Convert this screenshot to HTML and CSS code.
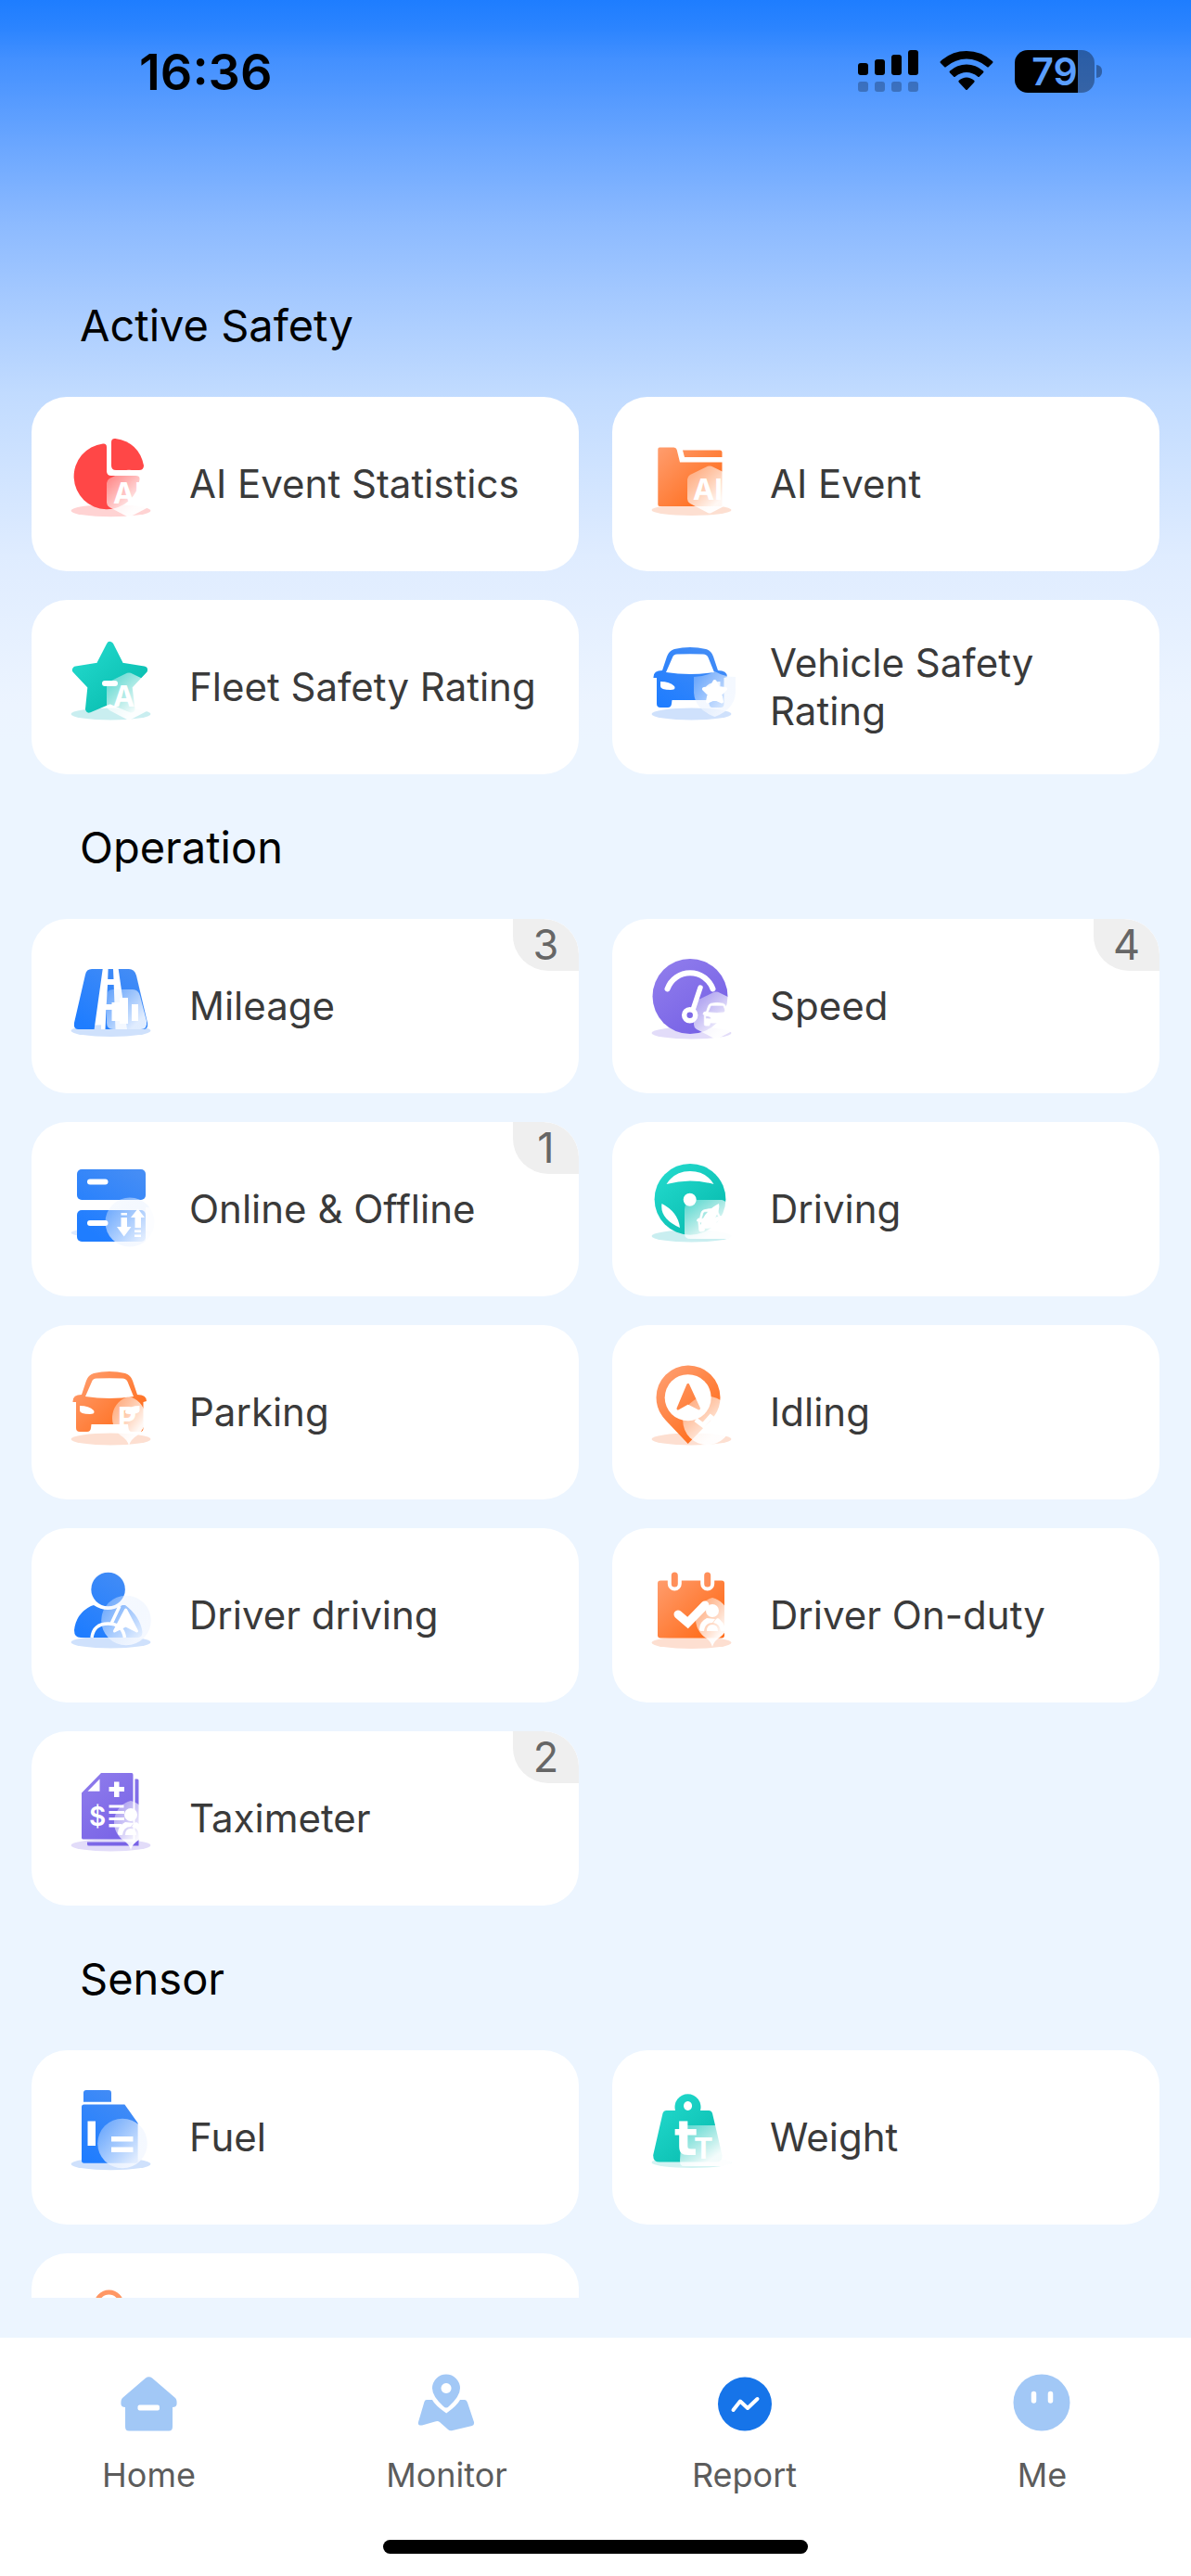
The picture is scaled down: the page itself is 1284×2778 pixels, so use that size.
FILE: index.html
```html
<!DOCTYPE html>
<html lang="en">

<head>
    <meta charset="UTF-8">
    <meta name="viewport" content="width=device-width, initial-scale=1.0">
    <title>Report</title>
    <link rel="stylesheet" href="styles.css">
</head>

<body>
    <!-- Shared gradients and shapes for the report icons -->
    <svg class="defs" aria-hidden="true">
        <defs>
            <linearGradient id="orange" gradientUnits="userSpaceOnUse" x1="8" y1="12" x2="66" y2="72"><stop offset="0" stop-color="#ff9d6e"/><stop offset="1" stop-color="#ff6c1a"/></linearGradient>
            <linearGradient id="teal" gradientUnits="userSpaceOnUse" x1="12" y1="8" x2="62" y2="64"><stop offset="0" stop-color="#22d9cc"/><stop offset="1" stop-color="#0bbfb2"/></linearGradient>
            <linearGradient id="blue" gradientUnits="userSpaceOnUse" x1="66" y1="8" x2="20" y2="76"><stop offset="0" stop-color="#458df5"/><stop offset="1" stop-color="#1f7dff"/></linearGradient>
            <linearGradient id="purple" gradientUnits="userSpaceOnUse" x1="10" y1="8" x2="60" y2="74"><stop offset="0" stop-color="#8f7cec"/><stop offset="1" stop-color="#7863e6"/></linearGradient>
            <linearGradient id="glass" x1="0" y1="0" x2="0.8" y2="0.9"><stop offset="0" stop-color="#fff" stop-opacity="0.25"/><stop offset="0.85" stop-color="#fff" stop-opacity="0.95"/></linearGradient>
            <linearGradient id="glass-blue" x1="0" y1="0" x2="0.8" y2="0.8"><stop offset="0" stop-color="#e4efff" stop-opacity="0.25"/><stop offset="1" stop-color="#f4f8ff" stop-opacity="0.9"/></linearGradient>
            <path id="car" fill-rule="evenodd" d="M25 11Q42 7 59 11Q65 13 67 19L72 34Q82 34 82 41L78.5 42V70Q78.5 74 75 74H66Q63 74 62.5 70L62 66H22.5L22 70Q21.5 74 18 74H10Q6 74 6 70V42L2.5 42Q2 34 12 34L17 19Q19 13 25 11ZM23 20L16 36Q42 40 68 36L61.5 20Q60 16.5 56 16.5Q42 16 28 16.5Q24 16.5 23 20ZM10 46V51Q10 55 21 55Q27 55 25 51Q20 46 10 46ZM74.5 46Q64.5 46 59.5 51Q57.5 55 63.5 55Q74.5 55 74.5 51Z"/>
            <path id="hexagon" d="M61 0.8Q63 0 65 0.8L84 10Q87 12 87 15V36Q87 39 84 41L65 51Q63 52 61 51L42 41Q39 39 39 36V15Q39 12 42 10Z"/>
            <path id="pin" d="M24 0A24 24 0 0 1 33 42Q26 46 24 53Q22 46 15 42A24 24 0 0 1 24 0Z"/>
            <g id="person"><circle cx="14" cy="7" r="7"/><path d="M8 15Q0 19 0 27Q0 29 3 29H5Q6 20 14 20L17 16ZM18 16L15 20Q22 21 23 29H28Q27 19 20 15ZM8 29Q8 22 14 22Q20 22 20 29Z"/></g>
        </defs>
    </svg>

    <header class="status-bar">
        <time class="clock">16:36</time>
        <div class="status-icons">
            <svg width="65" height="46" viewBox="0 0 65 46" aria-hidden="true">
                <g><rect x="0" y="14" width="11" height="13" rx="3"/><rect x="18" y="10" width="11" height="17" rx="3"/><rect x="36" y="5" width="11" height="22" rx="3"/><rect x="54" y="0" width="11" height="27" rx="3"/></g>
                <g opacity="0.25"><rect x="0" y="34" width="11" height="11" rx="3"/><rect x="18" y="34" width="11" height="11" rx="3"/><rect x="36" y="34" width="11" height="11" rx="3"/><rect x="54" y="34" width="11" height="11" rx="3"/></g>
            </svg>
            <svg width="58" height="46" viewBox="0 0 58 46" aria-hidden="true">
                <path d="M29 1Q45 1 57 12Q58 13 57 14L53 18Q52 19 51 18Q41 9.5 29 9.5Q17 9.5 7 18Q6 19 5 18L1 14Q0 13 1 12Q13 1 29 1Z"/>
                <path d="M29 15.5Q39 15.5 47 22.5Q48 23.5 47 24.5L43 28.5Q42 29.5 41 28.5Q35.5 24 29 24Q22.5 24 17 28.5Q16 29.5 15 28.5L11 24.5Q10 23.5 11 22.5Q19 15.5 29 15.5Z"/>
                <path d="M29 29.5Q33.5 29.5 37.5 33Q38 34 37 35L30 42.5Q29 43.5 28 42.5L21 35Q20 34 20.5 33Q24.5 29.5 29 29.5Z"/>
            </svg>
            <div class="battery">79</div>
        </div>
    </header>

    <main class="reports">
        <section>
            <h2>Active Safety</h2>
            <div class="grid">
                <a class="card" href="#">
                    <svg class="icon" viewBox="0 0 92 104" aria-hidden="true">
                        <ellipse cx="43.5" cy="80.7" rx="43" ry="6.5" fill="#ffd3d3"/>
                        <g fill="#ff4747">
                            <path d="M39 12V38Q39 43 44 43H70Q75 43 74.5 47A35.5 35.5 0 1 1 35 8.5Q39 8 39 12Z"/>
                            <path d="M44 7Q44 2.500 48.5 3Q74 7 79 32Q79 37 74 37H49Q44 37 44 32Z"/>
                        </g>
                        <use href="#hexagon" y="36" fill="url(#glass)"/>
                        <text class="mark" x="46" y="73">AI</text>
                    </svg>
                    <span>AI Event Statistics</span>
                </a>
                <a class="card" href="#">
                    <svg class="icon" viewBox="0 0 92 104" aria-hidden="true">
                        <ellipse cx="43.5" cy="80" rx="43" ry="6" fill="#fddfd1"/>
                        <g fill="url(#orange)">
                            <path d="M9 12.5H24.5Q27 12.5 27.7 15L31 28.5H76.5V76H9Q7.3 76 7.3 74V14.5Q7.3 12.5 9 12.5Z"/>
                            <path d="M34 15.5H74Q76.5 15.5 76.5 18V23H36Z"/>
                        </g>
                        <use href="#hexagon" y="32" fill="url(#glass)"/>
                        <text class="mark" x="45" y="69">AI</text>
                    </svg>
                    <span>AI Event</span>
                </a>
                <a class="card" href="#">
                    <svg class="icon" viewBox="0 0 92 104" aria-hidden="true">
                        <ellipse cx="43.5" cy="81" rx="43" ry="6.5" fill="#c9eef0"/>
                        <path d="M42.6 7L54 29.5L79 33.5L62.5 51L65.5 75.5L42.6 66L20 75.5L22.5 51L6 33.5L31 29.5Z" fill="url(#teal)" stroke="url(#teal)" stroke-width="8" stroke-linejoin="round"/>
                        <use href="#hexagon" y="36" fill="url(#glass)"/>
                        <rect x="34" y="45" width="17" height="6" rx="3" fill="#fff"/>
                        <text class="mark" x="46" y="73">AI</text>
                    </svg>
                    <span>Fleet Safety Rating</span>
                </a>
                <a class="card" href="#">
                    <svg class="icon" viewBox="0 0 92 104" aria-hidden="true">
                        <ellipse cx="43.5" cy="81" rx="43" ry="6.5" fill="#cfe1fc"/>
                        <use href="#car" fill="url(#blue)"/>
                        <path d="M46 41Q58 41 68.5 35Q79 41 91 41V58Q90 76 68.5 84Q47 76 46 58Z" fill="url(#glass-blue)"/>
                        <path d="M68.5 46L72 53L80 54L74.5 59.5L76 67.5L68.5 64L61 67.5L62.5 59.5L57 54L65 53Z" fill="#fff" stroke="#fff" stroke-width="4" stroke-linejoin="round"/>
                    </svg>
                    <span>Vehicle Safety Rating</span>
                </a>
            </div>
        </section>

        <section>
            <h2>Operation</h2>
            <div class="grid">
                <a class="card" href="#">
                    <svg class="icon" viewBox="0 0 92 104" aria-hidden="true">
                        <ellipse cx="43.5" cy="78.5" rx="43" ry="6.5" fill="#cfe1fc"/>
                        <path d="M33 77H63L52 12H34.5Z" fill="#fff"/>
                        <g fill="url(#blue)">
                            <path d="M34.7 12L25.6 77H8Q3 77 4 70L16 18Q17 12 23 12Z"/>
                            <path d="M51.7 12H63Q69 12 71 19L83 70Q84 77 79 77H61Z"/>
                            <path d="M40.6 12H46L46.5 23H40.2ZM40 29H46.7L47.5 50H38.8ZM38.5 56H47.7L48.5 77H37.5Z"/>
                        </g>
                        <path d="M46 34H67Q73 34 75 41L82 68Q83 77 76 77H46Q39 77 39 70V41Q39 34 46 34Z" fill="url(#glass-blue)"/>
                        <path d="M44.5 48H53V68H44.5ZM53 43H62V71H53ZM66 50H73V68H66Z" fill="#fff"/>
                        <path d="M32 53H47" stroke="#fff" stroke-width="5"/>
                    </svg>
                    <span>Mileage</span>
                    <span class="badge">3</span>
                </a>
                <a class="card" href="#">
                    <svg class="icon" viewBox="0 0 92 104" aria-hidden="true">
                        <ellipse cx="43.5" cy="81" rx="43" ry="6.5" fill="#e2dcf9"/>
                        <circle cx="42" cy="41.5" r="40.5" fill="url(#purple)"/>
                        <use href="#hexagon" x="7" y="36" fill="url(#glass)"/>
                        <g fill="none" stroke="#fff" stroke-linecap="round">
                            <path d="M17.5 33.5A26 26 0 0 1 66.5 33.5" stroke-width="6"/>
                            <path d="M53 32L45 56" stroke-width="5.5"/>
                            <circle cx="41.7" cy="61.7" r="6" stroke-width="5.5"/>
                        </g>
                        <use href="#car" transform="translate(55 45) scale(0.38)" fill="#fff" stroke="#fff" stroke-width="2"/>
                    </svg>
                    <span>Speed</span>
                    <span class="badge">4</span>
                </a>
                <a class="card" href="#">
                    <svg class="icon" viewBox="0 0 92 104" aria-hidden="true">
                        <ellipse cx="43.5" cy="77.5" rx="43" ry="5.5" fill="#dfeafd"/>
                        <g fill="url(#blue)">
                            <rect x="7" y="9" width="74" height="33" rx="5"/>
                            <rect x="7" y="53" width="74" height="34" rx="5"/>
                        </g>
                        <circle cx="64" cy="66" r="26.5" fill="url(#glass-blue)"/>
                        <rect x="81" y="50" width="11" height="38" fill="#fff" opacity="0.7"/>
                        <g fill="#fff">
                            <rect x="18" y="19.5" width="22.5" height="6" rx="3"/>
                            <rect x="18" y="64" width="22.5" height="6" rx="3"/>
                            <path d="M54.5 61H61V71H65.5L57.7 81.5L50 71H54.5ZM54.5 56H61V58.5H54.5Z"/>
                            <path d="M69.5 72V61H65L72.6 51.5L80 61H76V72ZM69 74.5H76V77H69ZM69 79.5H76V82H69Z"/>
                        </g>
                    </svg>
                    <span>Online &amp; Offline</span>
                    <span class="badge">1</span>
                </a>
                <a class="card" href="#">
                    <svg class="icon" viewBox="0 0 92 104" aria-hidden="true">
                        <ellipse cx="43.5" cy="81" rx="43" ry="6.5" fill="#c9eef0"/>
                        <circle cx="42" cy="41.3" r="38.4" fill="url(#teal)"/>
                        <path d="M46 42H76Q80 42 82 48L88 78Q88 84 82 84H42Q36 84 36 78V52Q37 42 46 42Z" fill="url(#glass)"/>
                        <g fill="#fff">
                            <path d="M16.5 25Q25 11 42 11Q59 11 67.5 25Q42 18 16.5 25Z"/>
                            <circle cx="41.7" cy="41.7" r="7"/>
                            <path d="M11.5 46Q9 62 31 72Q29 55 11.5 46ZM73 46Q76 62 53 72Q55 55 73 46Z"/>
                            <use href="#car" transform="translate(47 50) rotate(-6) scale(0.36)" stroke="#fff" stroke-width="2"/>
                        </g>
                    </svg>
                    <span>Driving</span>
                </a>
                <a class="card" href="#">
                    <svg class="icon" viewBox="0 0 92 104" aria-hidden="true">
                        <ellipse cx="43.5" cy="81" rx="43" ry="6.5" fill="#fddfd1"/>
                        <use href="#car" y="-1" fill="url(#orange)"/>
                        <use href="#pin" x="39" y="35" fill="url(#glass)"/>
                        <text class="mark" x="51" y="69">P</text>
                    </svg>
                    <span>Parking</span>
                </a>
                <a class="card" href="#">
                    <svg class="icon" viewBox="0 0 92 104" aria-hidden="true">
                        <ellipse cx="43.5" cy="81" rx="43" ry="6.5" fill="#fddfd1"/>
                        <path d="M39.7 1.5A34.5 34.5 0 0 1 74.5 36Q74.5 50 64 61L39.7 86L16 61Q5.5 50 5.5 36A34.5 34.5 0 0 1 39.7 1.5Z" fill="url(#orange)"/>
                        <circle cx="39.7" cy="36.2" r="25" fill="#fff"/>
                        <path d="M39.7 22.5L51.5 48L39.7 42L29 48Z" fill="url(#orange)" stroke="url(#orange)" stroke-width="3" stroke-linejoin="round"/>
                        <circle cx="60.5" cy="61" r="26.3" fill="url(#glass)"/>
                        <path d="M48 60L56 66L64 57L69 61" fill="none" stroke="#fff" stroke-width="5"/>
                    </svg>
                    <span>Idling</span>
                </a>
                <a class="card" href="#">
                    <svg class="icon" viewBox="0 0 92 104" aria-hidden="true">
                        <ellipse cx="43.5" cy="81" rx="43" ry="6.5" fill="#cfe1fc"/>
                        <circle cx="40.6" cy="24" r="18.3" fill="url(#blue)"/>
                        <path d="M25 41Q40 51 56 41H59Q75 53 77.5 70Q77.5 76 72 76H11Q4 76 4 68Q6 50 22 42Z" fill="url(#blue)"/>
                        <circle cx="60" cy="57.5" r="26.8" fill="url(#glass-blue)"/>
                        <path d="M23 76Q25 61 40.5 61Q56 61 58.5 76M53 42L44 61" fill="none" stroke="#fff" stroke-width="3.5"/>
                        <path d="M59.6 46L71.5 69L59.6 63L47.5 69Z" fill="#fff" stroke="#fff" stroke-width="3" stroke-linejoin="round"/>
                    </svg>
                    <span>Driver driving</span>
                </a>
                <a class="card" href="#">
                    <svg class="icon" viewBox="0 0 92 104" aria-hidden="true">
                        <ellipse cx="43.5" cy="81.5" rx="43" ry="6.5" fill="#fddfd1"/>
                        <rect x="7" y="14.5" width="72" height="62" rx="3" fill="url(#orange)"/>
                        <path d="M25.3 5V18M60.7 5V18" stroke="#fff" stroke-width="15" stroke-linecap="round"/>
                        <path d="M25.3 9V18M60.7 9V18" stroke="#ff8f5a" stroke-width="7" stroke-linecap="round"/>
                        <use href="#pin" x="42" y="33" fill="url(#glass)"/>
                        <path d="M29 51L39.5 60L58 41" fill="none" stroke="#fff" stroke-width="9" stroke-linecap="round"/>
                        <use href="#person" x="52" y="40" fill="#fff"/>
                    </svg>
                    <span>Driver On-duty</span>
                </a>
                <a class="card" href="#">
                    <svg class="icon" viewBox="0 0 92 104" aria-hidden="true">
                        <ellipse cx="43.5" cy="81" rx="43" ry="6.5" fill="#e2dcf9"/>
                        <path d="M33 3H66Q67.5 3 67.5 5V74.5H14Q12 74.5 12 73V24.5ZM69.5 9.5H72Q73.5 9.5 73.5 11V81.5H20Q18 81.5 18 80V77.5H69.5Z" fill="url(#purple)"/>
                        <use href="#pin" x="41" y="33" fill="url(#glass)"/>
                        <g fill="#fff">
                            <path d="M31.5 9.5V22.7H18.5Z"/>
                            <path d="M47 12.5H52.5V18H58V23H52.5V29H47V23H41.5V18H47Z"/>
                            <path d="M41.5 37.5H57.5V40.5H41.5ZM41.5 44H58V47H41.5ZM41.5 51H58V54H41.5ZM41.5 58H55V61.5H41.5Z"/>
                            <use href="#person" x="51" y="41"/>
                        </g>
                        <text class="mark mark-small" x="20" y="60">$</text>
                    </svg>
                    <span>Taximeter</span>
                    <span class="badge">2</span>
                </a>
            </div>
        </section>

        <section>
            <h2>Sensor</h2>
            <div class="grid">
                <a class="card" href="#">
                    <svg class="icon" viewBox="0 0 92 104" aria-hidden="true">
                        <ellipse cx="43.5" cy="80.7" rx="43" ry="6.5" fill="#cfe1fc"/>
                        <path d="M14 13.7V4Q14 1 17 1H41Q44 1 44 4V13.7ZM14.5 16.5H58.4L72.6 36.5V77Q72.6 79.7 70 79.7H14.5Q12 79.7 12 77V19Q12 16.5 14.5 16.5Z" fill="url(#blue)"/>
                        <circle cx="56" cy="58.5" r="26.8" fill="url(#glass-blue)"/>
                        <path d="M18.5 34.5H27V61H18.5ZM44 51H67.5V56.5H44ZM44 62.5H67.5V68H44Z" fill="#fff"/>
                    </svg>
                    <span>Fuel</span>
                </a>
                <a class="card" href="#">
                    <svg class="icon" viewBox="0 0 92 104" aria-hidden="true">
                        <ellipse cx="43.5" cy="79" rx="43" ry="6" fill="#d3f3f2"/>
                        <path fill-rule="evenodd" d="M26 23A14 14 0 1 1 53 23H62Q65 23 66 26L76.5 71Q77 78.5 70 78.5H9Q2 78.5 2.2 71L12.5 26Q13.5 23 16.5 23ZM39.5 13A4.5 5 0 1 0 39.6 13Z" fill="url(#teal)"/>
                        <path d="M38 39H74L86 75Q88 83 80 83H35Q31 83 31 77L33 44Q34 39 38 39Z" fill="url(#glass)"/>
                        <text class="mark mark-ton" x="25" y="71">t</text>
                        <text class="mark" x="46" y="75">T</text>
                    </svg>
                    <span>Weight</span>
                </a>
                <a class="card" href="#">
                    <svg class="icon" viewBox="0 0 92 104" aria-hidden="true">
                        <path d="M28 70V13.5A13.4 13.4 0 0 1 55 13.5V70" fill="none" stroke="#ff9765" stroke-width="5"/>
                    </svg>
                </a>
            </div>
        </section>
    </main>

    <nav class="tab-bar">
        <ul>
            <li><a href="#">
                <svg viewBox="0 0 64 64" fill="#a2c8f6" aria-hidden="true">
                    <path d="M28 5.5Q31.5 3 35 5.5L60 27Q62 29 61.5 34Q61 37 57 37V58Q57 62.5 53 62.5H10Q6 62.5 6 58V37Q2 37 1.5 34Q1 29 3 27Z"/>
                    <rect x="19.5" y="34.5" width="23.5" height="6" rx="2" fill="#fff"/>
                </svg>
                Home
            </a></li>
            <li><a href="#">
                <svg viewBox="0 0 64 64" fill="#a2c8f6" aria-hidden="true">
                    <path fill-rule="evenodd" d="M31 1.5A15 15 0 0 1 46 16.5Q46 25 34 36Q31 39 28 36Q16 25 16 16.5A15 15 0 0 1 31 1.5ZM31 11A5.5 5.5 0 1 0 31.1 11Z"/>
                    <path d="M10 29H16Q19 35 31.2 43.5Q43 35 46 29H51Q53 29 54 32L61 53Q61.5 56 59 57L38 62Q35 63 33 61L24 53Q22 51.5 19 52.5L5 56.5Q0 57 1 53L7.5 31Q8 29 10 29Z"/>
                </svg>
                Monitor
            </a></li>
            <li><a href="#" aria-current="page">
                <svg viewBox="0 0 64 64" aria-hidden="true">
                    <circle cx="32" cy="33.5" r="29" fill="#1674e9"/>
                    <path d="M19.5 40L27 30.5L35 38L45.5 28" fill="none" stroke="#fff" stroke-width="4" stroke-linecap="round" stroke-linejoin="round"/>
                </svg>
                Report
            </a></li>
            <li><a href="#">
                <svg viewBox="0 0 64 64" aria-hidden="true">
                    <circle cx="31" cy="32" r="30.5" fill="#a2c8f6"/>
                    <path d="M22.5 22.5V30M40.5 22.5V30" stroke="#fff" stroke-width="5.5" stroke-linecap="round"/>
                </svg>
                Me
            </a></li>
        </ul>
        <div class="home-indicator"></div>
    </nav>
</body>

</html>
```
FILE: styles.css
```css
* {
    box-sizing: border-box;
}

body {
    margin: 0;
    height: 100vh;
    display: flex;
    flex-direction: column;
    font-family: Inter, "Liberation Sans", sans-serif;
    color: #000;
    background: #ecf5ff linear-gradient(#1e7dff 0, #2b84ff 30px, #4390ff 64px, #68a5ff 150px, #8cbaff 240px, #a6caff 326px, #c1dbff 424px, #dfecff 600px, #ecf4ff 760px, #ecf5ff 800px) no-repeat;
}

a {
    color: inherit;
    text-decoration: none;
}

.defs {
    position: absolute;
    width: 0;
    height: 0;
}

/* Status bar */
.status-bar {
    display: flex;
    align-items: center;
    justify-content: space-between;
    height: 154px;
    padding: 0 96px 0 150px;
}

.clock {
    font-size: 54px;
    font-weight: 600;
}

.status-icons {
    display: flex;
    align-items: center;
    gap: 23px;
}

.battery {
    position: relative;
    width: 86px;
    height: 46px;
    margin-right: 8px;
    border-radius: 14px;
    background: linear-gradient(90deg, #000 68px, rgba(0, 0, 0, 0.35) 68px);
    color: #5a9eff;
    font-size: 41px;
    font-weight: 600;
    line-height: 46px;
    text-align: center;
}

.battery::after {
    content: "";
    position: absolute;
    top: 16px;
    right: -8px;
    width: 6px;
    height: 14px;
    border-radius: 0 6px 6px 0;
    background: rgba(0, 0, 0, 0.35);
}

/* Report list */
.reports {
    flex: 1;
    min-height: 0;
    overflow: hidden;
    margin: 118px 0 43px;
    padding: 0 34px;
}

h2 {
    display: flex;
    align-items: center;
    height: 156px;
    margin: 0;
    padding-left: 52px;
    font-size: 47px;
    font-weight: 400;
}

.grid {
    display: grid;
    grid-template-columns: 1fr 1fr;
    gap: 31px 36px;
}

.card {
    position: relative;
    display: flex;
    align-items: center;
    gap: 36px;
    height: 188px;
    padding: 0 34px 0 42px;
    overflow: hidden;
    border-radius: 38px;
    background: #fff;
    color: #3a3a3a;
    font-size: 42px;
    line-height: 52px;
}

.icon {
    flex: none;
    width: 92px;
    height: 104px;
    overflow: visible;
}

.mark {
    fill: #fff;
    font-size: 31px;
    font-weight: 700;
}

.mark-small {
    font-size: 28px;
    font-weight: 600;
}

.mark-ton {
    font-family: "DejaVu Sans", sans-serif;
    font-size: 52px;
}

.badge {
    position: absolute;
    top: 0;
    right: 0;
    width: 71px;
    height: 56px;
    border-radius: 0 38px 0 38px;
    background: #efefef;
    color: #666;
    font-size: 45px;
    line-height: 56px;
    text-align: center;
}

/* Tab bar */
.tab-bar {
    padding: 38px 0 24px;
    background: #fff;
}

.tab-bar ul {
    display: flex;
    margin: 0 0 48px;
    padding: 0;
    list-style: none;
}

.tab-bar li {
    flex: 1;
}

.tab-bar a {
    display: flex;
    flex-direction: column;
    align-items: center;
    gap: 24px;
    color: #5c5c5c;
    font-size: 36px;
    line-height: 44px;
}

.tab-bar svg {
    width: 64px;
    height: 64px;
}

.home-indicator {
    width: 458px;
    height: 15px;
    margin: 0 auto;
    border-radius: 8px;
    background: #000;
}
```
